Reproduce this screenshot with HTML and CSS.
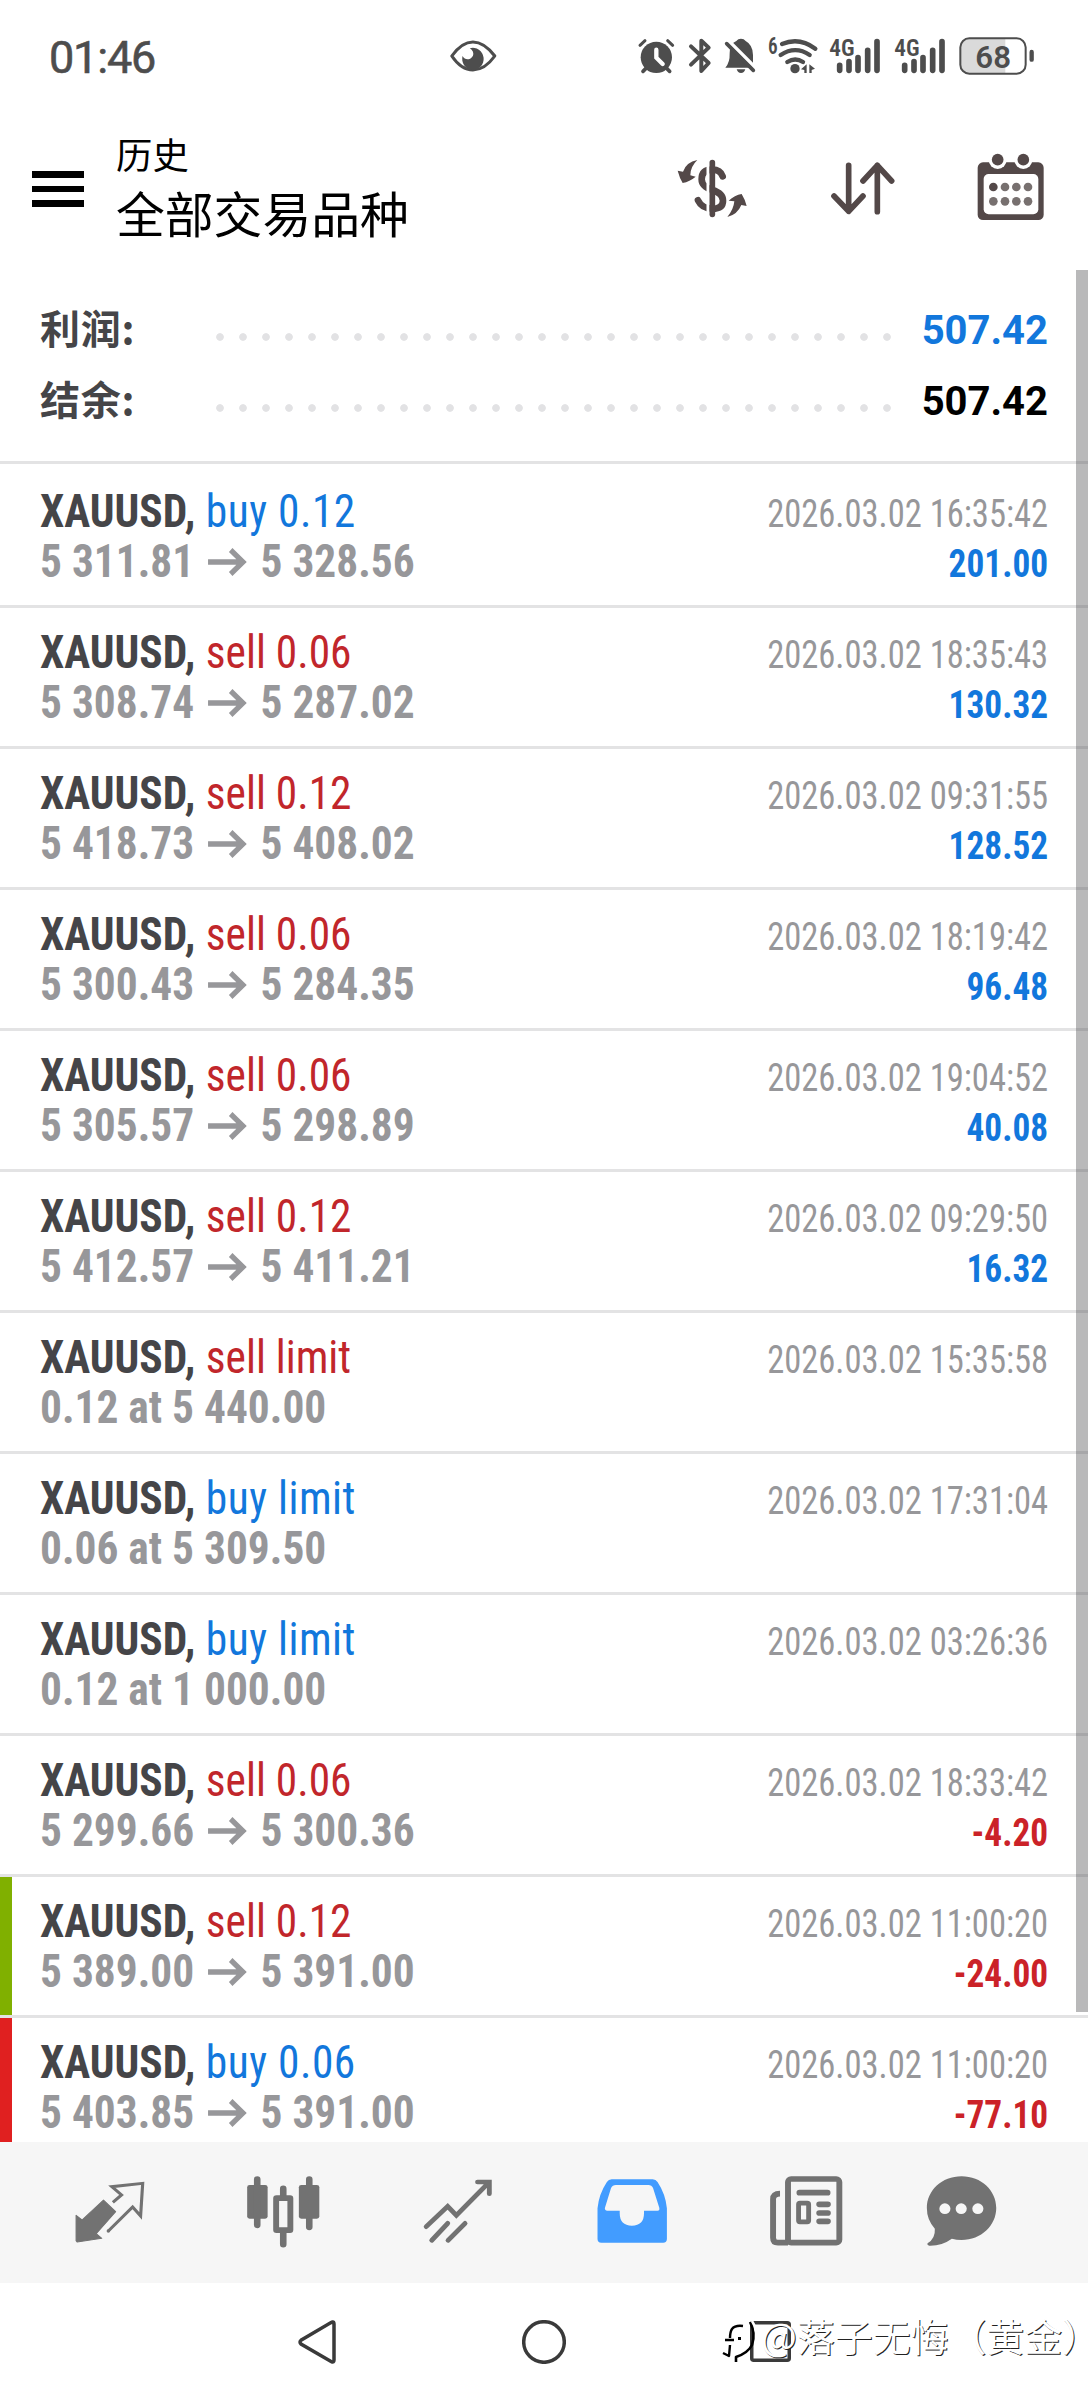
FILE: index.html
```html
<!DOCTYPE html>
<html lang="zh-CN">
<head>
<meta charset="utf-8">
<title>历史</title>
<link rel="stylesheet" href="styles.css">
</head>
<body>
<div class="status">
  <span class="clock">01:46</span>
  <svg class="eye" viewBox="1290 57 146 210" preserveAspectRatio="none"><path d="M1301 168Q1330 126 1362 126T1425 168Q1396 210 1362 210T1301 168Z" fill="none" stroke="#4d4d4d" stroke-width="9" stroke-linejoin="round"/><path d="M1353 145A31 33 0 1 1 1332 168Q1340 182 1354 176Q1366 168 1362 155Q1359 149 1353 145Z" fill="#4d4d4d"/></svg>
  <div class="indicators">
    <svg viewBox="105 57 140 210" width="46.67" height="70"><g stroke="#4d4d4d" stroke-linecap="round"><circle cx="169" cy="172" r="47" fill="#4d4d4d" stroke="none"/><path d="M120 136L135 122M203 122L218 136" stroke-width="9"/><path d="M129 214L143 200M209 214L195 200" stroke-width="11"/><path d="M169 149V173L188 192" fill="none" stroke="#fff" stroke-width="13"/></g></svg>
    <svg viewBox="245 57 110 210" width="36.67" height="70"><path d="M272 139L325 189L303 213V122L325 143L272 194" fill="none" stroke="#4d4d4d" stroke-width="12" stroke-linejoin="round" stroke-linecap="round"/></svg>
    <svg viewBox="355 57 130 210" width="43.33" height="70"><path d="M377 203Q391 188 390 160Q390 130 410 123Q415 116 424 116T438 123Q460 135 460 165V203Z" fill="#4d4d4d"/><path d="M388 124L475 211" stroke="#fff" stroke-width="11"/><path d="M381 131L461 211" stroke="#4d4d4d" stroke-width="11" stroke-linecap="round"/><path d="M411 208H437Q434 219 424 219T411 208Z" fill="#4d4d4d"/></svg>
    <svg viewBox="485 57 190 210" width="63.33" height="70"><g fill="none" stroke="#4d4d4d" stroke-width="13" stroke-linecap="round"><path d="M545 132Q597 110 645 146M541 165Q585 136 628 165M561 186Q585 171 608 186"/></g><g fill="#4d4d4d"><circle cx="584" cy="206" r="14"/><path d="M602 208L619 193V219H612V210ZM627 193L644 206L634 210V219H627Z"/><text x="503" y="162" class="net" textLength="29" lengthAdjust="spacingAndGlyphs">6</text></g></svg>
    <svg viewBox="675 57 195 210" width="65" height="70"><path d="M719 196V211M747 185V211M774 173V211M803 151V211M831 125V211" stroke="#4d4d4d" stroke-width="17" stroke-linecap="round"/><text x="688" y="167" class="net" textLength="76" lengthAdjust="spacingAndGlyphs">4G</text></svg>
    <svg viewBox="675 57 195 210" width="65" height="70"><path d="M719 196V211M747 185V211M774 173V211M803 151V211M831 125V211" stroke="#4d4d4d" stroke-width="17" stroke-linecap="round"/><text x="688" y="167" class="net" textLength="76" lengthAdjust="spacingAndGlyphs">4G</text></svg>
    <svg viewBox="1065 57 245 210" width="81.67" height="70"><path d="M1216 117H1108Q1083 117 1083 141V195Q1083 219 1108 219H1216Z" fill="#dadada"/><rect x="1081" y="115" width="196" height="106" rx="27" fill="none" stroke="#4d4d4d" stroke-width="6"/><path d="M1295 156V179" stroke="#4d4d4d" stroke-width="13" stroke-linecap="round"/><text x="1126" y="204" class="level" textLength="107" lengthAdjust="spacingAndGlyphs">68</text></svg>
  </div>
</div>

<header class="header">
  <div class="menu"><i></i><i></i><i></i></div>
  <div class="titles"><div class="title">历史</div><div class="subtitle">全部交易品种</div></div>
  <div class="actions">
    <svg viewBox="220 447 235 240" width="78.33" height="80"><path d="M369 529Q362 509 338 509Q306 509 306 538Q306 560 338 570T370 602Q370 626 338 626Q307 626 295 601" fill="none" stroke="#534848" stroke-width="20" stroke-linecap="round"/><path d="M325 490V645" stroke="#fff" stroke-width="9"/><path d="M338 488V643" stroke="#534848" stroke-width="17" stroke-linecap="round"/><path d="M293 480Q260 486 250 515L234 512Q240 535 249 549Q270 545 288 530L272 526Q272 500 293 480ZM383 651Q402 628 404 604L387 602Q405 585 426 582Q436 598 441 618L425 615Q414 643 383 651Z" fill="#534848"/></svg>
    <svg viewBox="680 447 215 240" width="71.67" height="80"><path d="M745 496V634M701 588L745 634L788 588M831 635V496M788 543L831 496L874 543" fill="none" stroke="#534848" stroke-width="17" stroke-linecap="round" stroke-linejoin="round"/></svg>
    <svg viewBox="1120 447 225 240" width="75" height="80"><rect x="1134" y="487" width="198" height="173" rx="16" fill="#534848"/><rect x="1152" y="522" width="164" height="121" rx="15" fill="#fff"/><g fill="#fff"><circle cx="1194" cy="480" r="27"/><circle cx="1271" cy="480" r="27"/></g><g fill="#534848"><circle cx="1194" cy="479" r="17.5"/><circle cx="1271" cy="479" r="17.5"/><circle cx="1181" cy="561" r="13"/></g><g fill="#77706f"><circle cx="1216" cy="561" r="13"/><circle cx="1250" cy="561" r="13"/><circle cx="1285" cy="561" r="13"/><circle cx="1181" cy="604" r="13"/><circle cx="1216" cy="604" r="13"/><circle cx="1250" cy="604" r="13"/><circle cx="1285" cy="604" r="13"/></g></svg>
  </div>
</header>

<main class="content">
  <section class="summary">
    <div class="total"><span class="label">利润:</span><span class="dots"></span><b class="blue">507.42</b></div>
    <div class="total"><span class="label">结余:</span><span class="dots"></span><b>507.42</b></div>
  </section>
  <ul class="deals" id="deals"></ul>
  <div class="scrollbar"></div>
</main>

<nav class="tabs">
  <svg viewBox="66 66 502.4 423" preserveAspectRatio="none"><path d="M298 240L333 275L277 341L293 355L222 366L219 362V286L236 300Z" fill="#727272" stroke="#727272" stroke-width="3" stroke-linejoin="round"/><path d="M325 247L350 225L322 200L411 190L405 288L382 261L312 333" fill="none" stroke="#727272" stroke-width="9"/><circle cx="312" cy="333" r="5" fill="#727272"/></svg>
  <svg viewBox="568.4 66 502.4 423" preserveAspectRatio="none"><g fill="#727272"><rect x="713" y="195" width="59" height="101" rx="7"/><rect x="862" y="195" width="59" height="101" rx="7"/></g><path d="M742 178V315M892 178V321M817 206V230M817 335V373" stroke="#727272" stroke-width="19" stroke-linecap="round"/><rect x="796.500" y="234.500" width="41" height="96" rx="1" fill="#f6f6f6" stroke="#727272" stroke-width="17" stroke-linejoin="round"/></svg>
  <svg viewBox="1070.800 66 502.400 423" preserveAspectRatio="none"><path d="M1227 320L1289 259L1314 286L1408 187M1375 186H1409V221M1289 310L1243 361M1339 310L1290 361" fill="none" stroke="#727272" stroke-width="14" stroke-linecap="round"/></svg>
  <svg viewBox="5.500 66 502.400 423" preserveAspectRatio="none"><path fill="#429cff" fill-rule="evenodd" d="M195 178H313Q322 178 327 186Q350 222 354 265V357Q354 368 343 368H165Q154 368 154 357V265Q158 222 181 186Q186 178 195 178ZM207 195Q197 195 193 204L175 265Q175 272 181 272H218V280Q218 317 253 317T288 280V272H327Q334 272 332 263L314 204Q310 195 301 195Z"/></svg>
  <svg viewBox="508 66 502.400 423" preserveAspectRatio="none"><g fill="none" stroke="#727272" stroke-width="17"><rect x="704" y="177" width="148" height="191" rx="9"/><path d="M681 221Q661 221 661 238V353Q661 368 675 368H704"/><rect x="734.500" y="249.500" width="29" height="56" rx="4" stroke-width="14"/><path d="M737 218H818M794 253H819M794 279H819M794 304H819" stroke-linecap="round"/></g></svg>
  <svg class="last" viewBox="1010.300 66 392 423" preserveAspectRatio="none"><path d="M1205 169C1262 169 1305 212 1305 264S1262 360 1205 360Q1190 360 1177 356Q1148 378 1112 377Q1105 376 1107 370Q1130 355 1128 326Q1105 300 1105 264C1105 212 1148 169 1205 169Z" fill="#727272"/><g fill="#f6f6f6"><circle cx="1157" cy="266" r="16"/><circle cx="1204" cy="266" r="16"/><circle cx="1252" cy="266" r="16"/></g></svg>
</nav>

<div class="sysnav">
  <svg width="38" height="44" viewBox="0 0 38 44"><path d="M34.500 2Q36 1.600 36 4V40Q36 43 33.500 41.700L3 24Q1 22 3 20.200L33 2.500Z" fill="none" stroke="#3a3a3a" stroke-width="3.500"/></svg>
  <svg width="44" height="44" viewBox="0 0 44 44"><circle cx="22" cy="22" r="20.300" fill="none" stroke="#3a3a3a" stroke-width="3.500"/></svg>
  <svg width="41" height="41" viewBox="0 0 41 41"><rect x="1.750" y="1.750" width="37.500" height="37.500" rx="2" fill="none" stroke="#3a3a3a" stroke-width="3.500"/></svg>
</div>
<div class="watermark">
  <svg width="38" height="44" viewBox="0 0 38 44"><g fill="none" stroke="#000" stroke-linejoin="round"><path d="M22 6Q14 5 11 9Q9 12 9 18M4 20H13M9 25L8 36L2 33" stroke-width="2.400"/><path d="M17 18.500H20" stroke-width="3"/><path d="M29 2Q35 13 31 25Q27 33 15 37V42" stroke-width="2.600"/><path d="M31 1Q39 14 34 27" stroke="#fff" stroke-width="2.500"/></g></svg><span>@落子无悔（黄金<span class="close">）</span></span>
</div>
<script src="deals.js"></script>
</body>
</html>
```
FILE: deals.js
```js
const deals = [
  ['buy', '0.12', '5 311.81', '5 328.56', '16:35:42', '201.00'],
  ['sell', '0.06', '5 308.74', '5 287.02', '18:35:43', '130.32'],
  ['sell', '0.12', '5 418.73', '5 408.02', '09:31:55', '128.52'],
  ['sell', '0.06', '5 300.43', '5 284.35', '18:19:42', '96.48'],
  ['sell', '0.06', '5 305.57', '5 298.89', '19:04:52', '40.08'],
  ['sell', '0.12', '5 412.57', '5 411.21', '09:29:50', '16.32'],
  ['sell', 'limit', '0.12 at 5 440.00', '', '15:35:58', ''],
  ['buy', 'limit', '0.06 at 5 309.50', '', '17:31:04', ''],
  ['buy', 'limit', '0.12 at 1 000.00', '', '03:26:36', ''],
  ['sell', '0.06', '5 299.66', '5 300.36', '18:33:42', '-4.20'],
  ['sell', '0.12', '5 389.00', '5 391.00', '11:00:20', '-24.00', 'tp'],
  ['buy', '0.06', '5 403.85', '5 391.00', '11:00:20', '-77.10', 'sl']
];
const arrow = '<svg class="arrow" viewBox="0 0 40 28"><path d="M0 14H37M24 2L37 14L24 26" fill="none" stroke="currentColor" stroke-width="5.5"/></svg>';
document.getElementById('deals').innerHTML = deals.map(([side, size, from, to, time, profit, mark]) => `
  <li class="deal ${mark || ''}">
    <div class="left">
      <div class="name"><b>XAUUSD,</b> <span class="${side}">${side} ${size}</span></div>
      <div class="price">${from}${to ? arrow + to : ''}</div>
    </div>
    <div class="right">
      <div class="time">2026.03.02 ${time}</div>
      <div class="profit ${profit[0] === '-' ? 'loss' : ''}">${profit}</div>
    </div>
  </li>`).join('');
```
FILE: styles.css
```css
* { box-sizing: border-box; }
body {
  margin: 0;
  width: 1088px;
  height: 2400px;
  overflow: hidden;
  position: relative;
  display: flex;
  flex-direction: column;
  background: #fff;
  font-family: Roboto, "Noto Sans CJK SC", sans-serif;
}
svg { display: block; flex: none; }

.status { height: 108px; display: flex; align-items: center; padding: 0 51.3px 0 49px; color: #4d4d4d; }
.clock { width: 398.6px; font-size: 45px; font-weight: 400; letter-spacing: -1.2px; -webkit-text-stroke: 0.6px #4d4d4d; padding-top: 6px; }
.eye { width: 50.6px; height: 70px; }
.indicators { display: flex; margin-left: auto; }
.net { font: 600 69px "Roboto Condensed", Roboto, sans-serif; fill: #4d4d4d; }
.level { font: 600 94px Roboto, sans-serif; fill: #4d4d4d; }

.header { height: 162px; display: flex; align-items: center; padding: 0 39.7px 0 32px; }
.menu { width: 52px; display: flex; flex-direction: column; gap: 8px; }
.menu i { height: 6.5px; background: #000; }
.titles { margin: -5px 0 0 32px; color: #000; font-family: "Noto Sans CJK SC", sans-serif; }
.title { font-size: 36.4px; line-height: 51px; }
.subtitle { font-size: 48.8px; line-height: 66px; }
.actions { display: flex; gap: 75px; margin-left: auto; }

.content { position: relative; height: 1872px; overflow: hidden; }
.summary { height: 194px; padding: 24px 40px 0; border-bottom: 3px solid #e3e3e4; }
.total { height: 71px; display: flex; align-items: center; }
.label { width: 175.5px; padding-bottom: 4px; font: 700 40px/67px "Noto Sans CJK SC", sans-serif; letter-spacing: 0.8px; color: #454548; }
.dots { width: 690px; height: 8px; margin-top: 15px; background: radial-gradient(circle at 4px 4px, #e2e2e4 3.4px, transparent 4.2px) 0 0 / 23px 8px repeat-x; }
.total b { margin-left: auto; padding-top: 2px; font-size: 40px; font-weight: 700; color: #000; }
.total .blue { color: #1277dc; }

.deals { list-style: none; margin: 0; padding: 3px 0 0; }
.deal { height: 141px; display: flex; justify-content: space-between; padding: 19px 40px 0; border-bottom: 3px solid #e3e3e4; font-family: "Roboto Condensed", Roboto, sans-serif; line-height: 50px; white-space: nowrap; }
.deal.tp, .deal.sl { background: linear-gradient(#80b000, #80b000) 0 0 / 12px 138px no-repeat; }
.deal.sl { background-image: linear-gradient(#e02020, #e02020); }
.left { font-size: 46px; transform: scaleX(0.943); transform-origin: 0 0; }
.name b { font-weight: 700; color: #454548; }
.buy, .sell { margin-left: 0.6px; }
.buy { color: #1277dc; letter-spacing: 0.5px; }
.sell { color: #c1262b; letter-spacing: 0; }
.price { display: flex; align-items: center; font-weight: 700; color: #97979a; }
.arrow { width: 42.4px; height: 28px; margin: 2px 14px 0; }
.right { padding-top: 3px; font-size: 38px; text-align: right; }
.time, .profit { transform-origin: 100% 0; }
.time { color: #97979a; transform: scaleX(0.909); }
.profit { font-weight: 700; color: #1277dc; transform: scaleX(0.93); }
.profit.loss { color: #cb2228; }
.scrollbar { position: absolute; right: 0; top: 0; width: 12px; height: 1742px; background: rgba(60, 60, 64, 0.36); }

.tabs { height: 141px; display: grid; grid-template-columns: repeat(5, 174.3px) 136px; padding-left: 23px; background: #f6f6f6; }
.tabs svg { width: 174.3px; height: 141px; }
.tabs .last { width: 136px; }

.sysnav { height: 117px; display: flex; align-items: center; padding-left: 298px; }
.sysnav svg:nth-child(2) { margin-left: 185.5px; }
.sysnav svg:nth-child(3) { margin-left: 184px; }

.watermark { position: absolute; left: 721px; top: 2320px; display: flex; font: 400 37.9px/44px "Noto Sans CJK SC", sans-serif; color: #fff; text-shadow: 1px 1px 0 #222; white-space: nowrap; }
.watermark > span { margin-left: 2px; margin-top: -7px; }
.close { font-feature-settings: "halt"; }
```
